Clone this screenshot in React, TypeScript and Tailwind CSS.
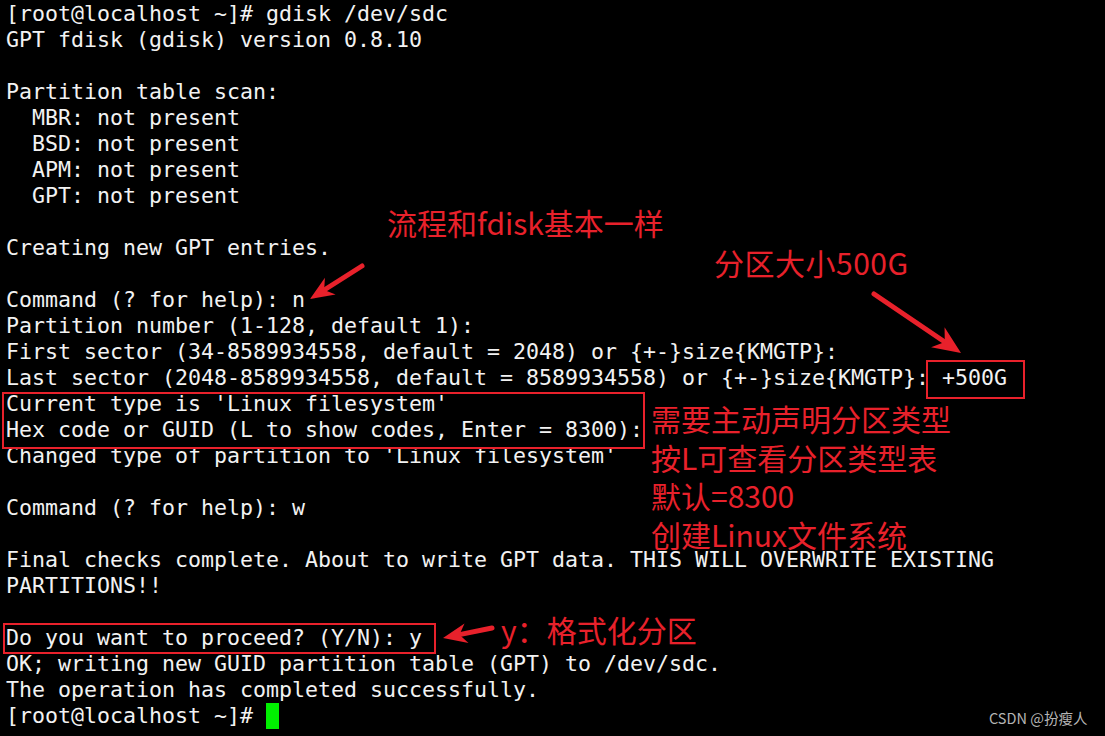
import React from "react";

const lines: string[] = [
  "[root@localhost ~]# gdisk /dev/sdc",
  "GPT fdisk (gdisk) version 0.8.10",
  "",
  "Partition table scan:",
  "  MBR: not present",
  "  BSD: not present",
  "  APM: not present",
  "  GPT: not present",
  "",
  "Creating new GPT entries.",
  "",
  "Command (? for help): n",
  "Partition number (1-128, default 1):",
  "First sector (34-8589934558, default = 2048) or {+-}size{KMGTP}:",
  "Last sector (2048-8589934558, default = 8589934558) or {+-}size{KMGTP}: +500G",
  "Current type is 'Linux filesystem'",
  "Hex code or GUID (L to show codes, Enter = 8300):",
  "Changed type of partition to 'Linux filesystem'",
  "",
  "Command (? for help): w",
  "",
  "Final checks complete. About to write GPT data. THIS WILL OVERWRITE EXISTING",
  "PARTITIONS!!",
  "",
  "Do you want to proceed? (Y/N): y",
  "OK; writing new GUID partition table (GPT) to /dev/sdc.",
  "The operation has completed successfully.",
];

const RED = "#e8212b";

function arrowHead(tx: number, ty: number, fx: number, fy: number, len: number, half: number) {
  const dx = tx - fx;
  const dy = ty - fy;
  const l = Math.hypot(dx, dy);
  const ux = dx / l;
  const uy = dy / l;
  const bx = tx - ux * len;
  const by = ty - uy * len;
  const px = -uy;
  const py = ux;
  const nx = tx - ux * (len * 0.7);
  const ny = ty - uy * (len * 0.7);
  return {
    points: `${tx},${ty} ${bx + px * half},${by + py * half} ${nx},${ny} ${bx - px * half},${by - py * half}`,
    lx: nx,
    ly: ny,
  };
}

function Arrow({ fx, fy, tx, ty, len, half }: { fx: number; fy: number; tx: number; ty: number; len: number; half: number }) {
  const h = arrowHead(tx, ty, fx, fy, len, half);
  return (
    <g>
      <line x1={fx} y1={fy} x2={h.lx} y2={h.ly} stroke={RED} strokeWidth={5} strokeLinecap="round" />
      <polygon points={h.points} fill={RED} />
    </g>
  );
}

export default function App() {
  const cjk = { fontFamily: '"Noto Sans CJK SC", "Noto Sans", sans-serif' };
  return (
    <div className="relative w-[1105px] h-[736px] overflow-hidden bg-black">
      <div
        className="flex flex-col pt-[1px] pl-[6px] text-[21.6px] leading-[26px] text-[#f2f2f2] whitespace-pre"
        style={{ fontFamily: '"DejaVu Sans Mono", monospace' }}
      >
        {lines.map((l, i) => (
          <div key={i} className="h-[26px]">
            {l}
          </div>
        ))}
        <div className="h-[26px] flex">
          <span>{"[root@localhost ~]# "}</span>
          <span className="inline-block w-[13px] h-[26px] bg-[#00f000]" />
        </div>
      </div>

      {/* red boxes */}
      <div className="absolute left-[926px] top-[360px] w-[99px] h-[39px] border-2 border-[#e8212b]" />
      <div className="absolute left-[2px] top-[392px] w-[643px] h-[57px] border-2 border-[#e8212b]" />
      <div className="absolute left-[3px] top-[623px] w-[433px] h-[31px] border-2 border-[#e8212b]" />

      {/* arrows */}
      <svg className="absolute left-0 top-0 pointer-events-none" width={1105} height={736}>
        <Arrow fx={362} fy={266} tx={310} ty={299} len={24} half={10} />
        <Arrow fx={874} fy={294} tx={961} ty={353} len={28} half={12} />
        <Arrow fx={492} fy={628} tx={443} ty={638} len={24} half={10} />
      </svg>

      {/* annotations */}
      <div className="absolute left-[387px] top-[203px] text-[30px] leading-[39px] text-[#e8212b] whitespace-nowrap" style={cjk}>
        流程和fdisk基本一样
      </div>
      <div className="absolute left-[714px] top-[243px] text-[30px] leading-[39px] text-[#e8212b] whitespace-nowrap tracking-[0.5px]" style={cjk}>
        分区大小500G
      </div>
      <div className="absolute left-[651px] top-[399px] flex flex-col text-[30px] leading-[38.7px] text-[#e8212b] whitespace-nowrap" style={cjk}>
        <div>需要主动声明分区类型</div>
        <div>按L可查看分区类型表</div>
        <div>默认=8300</div>
        <div>创建Linux文件系统</div>
      </div>
      <div className="absolute left-[501px] top-[610px] text-[30px] leading-[39px] text-[#e8212b] whitespace-nowrap" style={cjk}>
        y：格式化分区
      </div>

      <div className="absolute left-[989px] top-[708px] text-[14.5px] leading-[20px] text-[#b4b4b4] whitespace-nowrap" style={cjk}>
        CSDN @扮瘦人
      </div>
    </div>
  );
}
